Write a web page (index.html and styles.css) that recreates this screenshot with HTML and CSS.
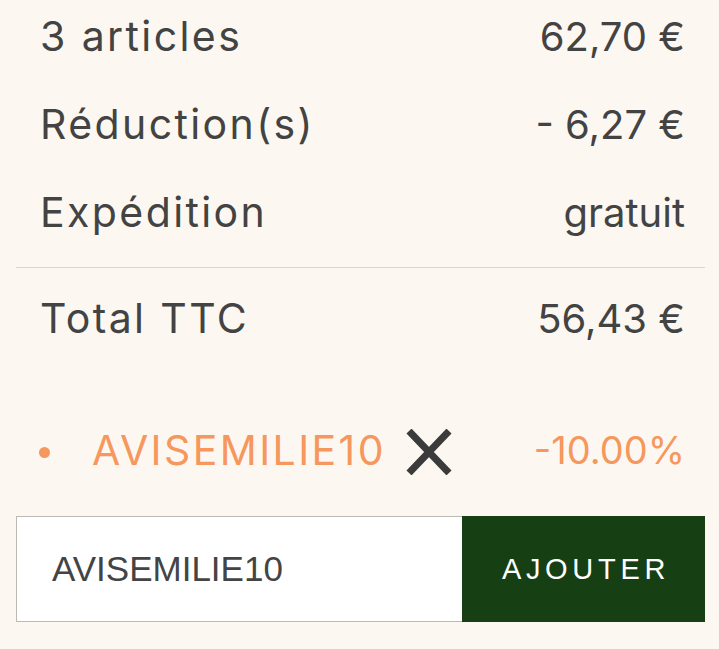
FILE: index.html
```html
<!DOCTYPE html>
<html lang="fr">
<head>
    <meta charset="UTF-8">
    <meta name="viewport" content="width=device-width, initial-scale=1.0">
    <title>Panier</title>
    <link rel="stylesheet" href="styles.css">
</head>
<body>
    <div class="cart-summary">
        <div class="lines">
            <div class="line">
                <span class="label">3 articles</span>
                <span class="value">62,70 €</span>
            </div>
            <div class="line">
                <span class="label">Réduction(s)</span>
                <span class="value">- 6,27 €</span>
            </div>
            <div class="line">
                <span class="label">Expédition</span>
                <span class="value">gratuit</span>
            </div>
        </div>
        <div class="totals">
            <div class="line">
                <span class="label">Total TTC</span>
                <span class="value">56,43 €</span>
            </div>
        </div>
        <ul class="vouchers">
            <li class="voucher">
                <span class="voucher-name">AVISEMILIE10</span>
                <a class="voucher-remove" href="#">
                    <svg width="48" height="46" viewBox="0 0 48 46">
                        <path d="M4 2 L44 44 M44 2 L4 44" stroke="#3b3b3b" stroke-width="7" fill="none"/>
                    </svg>
                </a>
                <span class="voucher-value">-10.00%</span>
            </li>
        </ul>
        <form class="promo">
            <input class="promo-input" type="text" value="AVISEMILIE10">
            <button class="promo-btn" type="button">AJOUTER</button>
        </form>
    </div>
</body>
</html>
```

FILE: styles.css
```css
body {
    margin: 0;
    background-color: #fcf8f1;
}
.cart-summary {
    padding: 0 14px 0 16px;
    font-family: Inter, "Liberation Sans", sans-serif;
    color: #434343;
}
.lines {
    margin-top: -8px;
    padding: 0 20px 11px 24px;
    border-bottom: 1px solid #d6d6d4;
}
.line {
    display: flex;
    justify-content: space-between;
    align-items: center;
    height: 88px;
    font-size: 41px;
}
.label {
    letter-spacing: 2.4px;
}
.value {
    font-size: 40px;
}
.totals {
    padding: 6px 20px 0 24px;
}
.vouchers {
    list-style: none;
    margin: 0;
    padding: 44px 20px 0 24px;
}
.voucher {
    display: flex;
    align-items: center;
    height: 88px;
    font-size: 41px;
    color: #f6975d;
}
.voucher::before {
    content: "";
    width: 11px;
    height: 11px;
    border-radius: 50%;
    background-color: #f6975d;
    margin: 4px 42px 0 -1px;
}
.voucher-name {
    letter-spacing: 2.4px;
    margin-right: 19px;
}
.voucher-remove {
    display: flex;
    margin-top: 3px;
}
.voucher-value {
    margin-left: auto;
    font-size: 38px;
}
.promo {
    display: flex;
    margin-top: 22px;
    height: 106px;
}
.promo-input {
    flex: 1;
    min-width: 0;
    box-sizing: border-box;
    height: 106px;
    border: 1px solid #bdbab4;
    border-right: none;
    background: #fff;
    padding: 0 0 0 35px;
    font-family: "Liberation Sans", Arial, sans-serif;
    font-size: 35px;
    color: #444;
    outline: none;
}
.promo-btn {
    width: 243px;
    height: 106px;
    border: none;
    background-color: #163f14;
    color: #fff;
    font-family: "Liberation Sans", Arial, sans-serif;
    font-size: 29px;
    letter-spacing: 4.7px;
    padding: 0 0 0 5px;
}
```
